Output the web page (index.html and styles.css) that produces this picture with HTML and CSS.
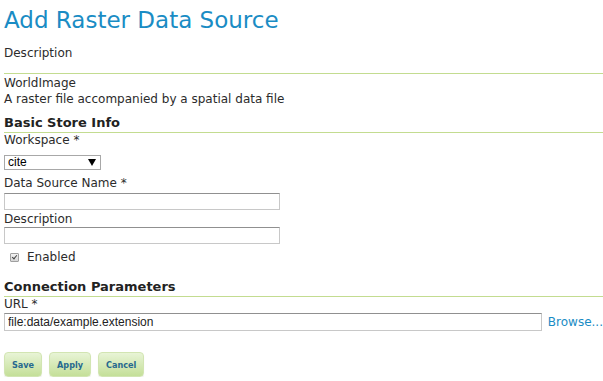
FILE: index.html
```html
<!DOCTYPE html>
<html lang="en">

<head>
  <meta charset="UTF-8">
  <title>Add Raster Data Source</title>
  <link rel="stylesheet" href="styles.css">
</head>

<body>
  <div class="page">
    <h1>Add Raster Data Source</h1>
    <p class="page-desc">Description</p>

    <div class="store-type">
      <div>WorldImage</div>
      <div>A raster file accompanied by a spatial data file</div>
    </div>

    <h3 class="first">Basic Store Info</h3>
    <ul class="fields">
      <li>
        <label for="workspace">Workspace *</label>
        <div class="select">
          <select id="workspace">
            <option>cite</option>
          </select>
        </div>
      </li>
      <li class="name-row">
        <label for="dsName">Data Source Name *</label>
        <input type="text" id="dsName" class="field">
      </li>
      <li class="desc-row">
        <label for="dsDesc">Description</label>
        <input type="text" id="dsDesc" class="field">
      </li>
      <li class="check">
        <input type="checkbox" id="enabled" checked>
        <label for="enabled">Enabled</label>
      </li>
    </ul>

    <h3>Connection Parameters</h3>
    <ul class="fields">
      <li>
        <label for="url">URL *</label>
        <div class="url-row">
          <input type="text" id="url" class="field wide" value="file:data/example.extension">
          <a href="#" class="browse">Browse...</a>
        </div>
      </li>
    </ul>

    <div class="buttons">
      <button>Save</button>
      <button>Apply</button>
      <button>Cancel</button>
    </div>
  </div>
</body>

</html>
```

FILE: styles.css
```css
/* page styles */
body {
  font-family: "DejaVu Sans", Verdana, sans-serif;
  font-size: 12px;
  color: #2b2b2b;
  margin: 0;
  padding: 0;
  background: #fff;
}

.page {
  padding: 0 0 0 4px;
  overflow: hidden;
}

h1 {
  font-size: 23px;
  font-weight: normal;
  color: #1a8cc4;
  margin: 5px 0 0 0;
  line-height: 30px;
}

.page-desc {
  margin: 11px 0 0 0;
  line-height: 14px;
}

.store-type {
  margin-top: 13px;
  border-top: 1px solid #c3dc90;
  padding-top: 1px;
  line-height: 16px;
}

h3 {
  font-size: 13px;
  font-weight: bold;
  margin: 14px 0 0 0;
  line-height: 18px;
  border-bottom: 1px solid #c3dc90;
  color: #222;
}

h3.first {
  margin-top: 7px;
}

.fields {
  list-style: none;
  margin: 0;
  padding: 0;
}

.fields li {
  line-height: 14px;
}

.fields li label {
  display: block;
}

/* select with a black triangle */
.select {
  position: relative;
  margin: 8px 0 0 0;
  width: 97px;
  height: 15px;
}

.select select {
  appearance: none;
  -webkit-appearance: none;
  box-sizing: border-box;
  width: 100%;
  height: 15px;
  font-family: "Liberation Sans", Arial, sans-serif;
  font-size: 12px;
  line-height: 13px;
  border: 1px solid #a8a8a8;
  border-radius: 0;
  background: #fff;
  padding: 0 0 0 3px;
  color: #000;
}

.select::after {
  content: "";
  position: absolute;
  right: 5px;
  top: 4px;
  border-left: 4px solid transparent;
  border-right: 4px solid transparent;
  border-top: 7px solid #000;
  pointer-events: none;
}

.name-row {
  margin-top: 6px;
}

.desc-row {
  margin-top: 2px;
}

.field {
  display: block;
  box-sizing: border-box;
  width: 276px;
  height: 17px;
  margin: 3px 0 0 0;
  border: 1px solid #c8c8c8;
  border-top-color: #909090;
  font-family: "Liberation Sans", Arial, sans-serif;
  font-size: 12px;
  color: #222;
  padding: 0 3px;
}

.desc-row .field {
  margin-top: 1px;
}

.field.wide {
  width: 546px;
  height: 18px;
}

/* small grey checkbox */
.fields li.check {
  display: flex;
  align-items: center;
  margin-top: 6px;
}

.fields li.check input {
  appearance: none;
  -webkit-appearance: none;
  position: relative;
  box-sizing: border-box;
  margin: 0 8px 0 6px;
  width: 9px;
  height: 9px;
  border: 1px solid #a0a0a0;
  border-radius: 1px;
  background: linear-gradient(#f2f2f2, #d6d6d6);
}

.fields li.check input:checked::after {
  content: "";
  position: absolute;
  left: 2px;
  top: 0;
  width: 2px;
  height: 4px;
  border-right: 1.5px solid #444;
  border-bottom: 1.5px solid #444;
  transform: rotate(40deg);
}

.fields li.check label {
  display: inline;
}

.url-row {
  display: flex;
  align-items: center;
  gap: 6px;
  margin-top: 2px;
}

.url-row .field {
  margin: 0;
}

.browse {
  color: #1a8cc4;
  text-decoration: none;
  white-space: nowrap;
}

.buttons {
  display: flex;
  gap: 7px;
  margin-top: 21px;
}

.buttons button {
  font-family: "DejaVu Sans Condensed", "DejaVu Sans", sans-serif;
  font-size: 9px;
  font-weight: bold;
  color: #27698f;
  height: 25px;
  padding: 0 7px;
  border: 1px solid #d2e5b2;
  border-radius: 4px;
  background: linear-gradient(#e8f4d6, #c4df98);
  box-shadow: 0 1px 1px rgba(0, 0, 0, 0.08);
}
```
